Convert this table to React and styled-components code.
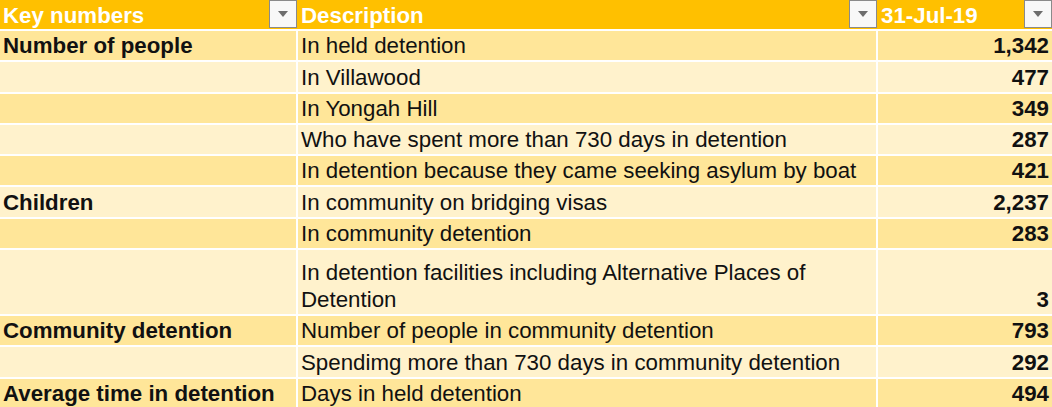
import React from 'react';
import styled, { createGlobalStyle } from 'styled-components';

const GlobalStyle = createGlobalStyle`
  html, body {
    margin: 0;
    padding: 0;
    background: #ffffff;
  }
  body {
    font-family: "Liberation Sans", Arial, sans-serif;
    overflow: hidden;
  }
`;

const Sheet = styled.div`
  width: 1052px;
  display: grid;
  grid-template-columns: 296px 578px 174px;
  column-gap: 2px;
  row-gap: 2px;
  background: #ffffff;
`;

const HeaderCell = styled.div`
  height: 29px;
  background: #ffc000;
  color: #ffffff;
  font-weight: bold;
  font-size: 22.3px;
  display: flex;
  align-items: center;
  justify-content: space-between;
  padding-left: 3px;
  margin-right: ${(p) => (p.last ? '0' : '-2px')};
  position: relative;
  z-index: ${(p) => (p.last ? 0 : 1)};
`;

const HeaderLabel = styled.span`
  line-height: 29px;
  padding-top: 2px;
`;

const FilterButton = styled.span`
  width: 28px;
  height: 28px;
  box-sizing: border-box;
  border: 1px solid #8a8a8a;
  background: #f8f8f8;
  display: flex;
  align-items: center;
  justify-content: center;
  margin-right: ${(p) => (p.last ? '0' : '1px')};
  align-self: flex-start;
  flex-shrink: 0;

  &::after {
    content: '';
    width: 0;
    height: 0;
    border-left: 5px solid transparent;
    border-right: 5px solid transparent;
    border-top: 6px solid #6d6d6d;
  }
`;

const Cell = styled.div`
  height: ${(p) => (p.tall ? '64px' : '29.3px')};
  background: ${(p) => (p.shade ? '#ffe699' : '#fff2cc')};
  color: #111111;
  font-size: 22.3px;
  line-height: 27px;
  font-weight: ${(p) => (p.bold ? 'bold' : 'normal')};
  text-align: ${(p) => (p.num ? 'right' : 'left')};
  padding: ${(p) => (p.num ? '0 3px 0 0' : '0 0 0 3px')};
  display: flex;
  flex-direction: column;
  justify-content: flex-end;
  padding-bottom: 1px;
  box-sizing: border-box;
  overflow: hidden;
  white-space: ${(p) => (p.wrap ? 'normal' : 'nowrap')};
`;

const rows = [
  { key: 'Number of people', desc: 'In held detention', value: '1,342' },
  { key: '', desc: 'In Villawood', value: '477' },
  { key: '', desc: 'In Yongah Hill', value: '349' },
  { key: '', desc: 'Who have spent more than 730 days in detention', value: '287' },
  { key: '', desc: 'In detention because they came seeking asylum by boat', value: '421' },
  { key: 'Children', desc: 'In community on bridging visas', value: '2,237' },
  { key: '', desc: 'In community detention', value: '283' },
  {
    key: '',
    desc: 'In detention facilities including Alternative Places of Detention',
    value: '3',
    tall: true,
  },
  { key: 'Community detention', desc: 'Number of people in community detention', value: '793' },
  { key: '', desc: 'Spendimg more than 730 days in community detention', value: '292' },
  { key: 'Average time in detention', desc: 'Days in held detention', value: '494' },
];

export default function App() {
  return (
    <>
      <GlobalStyle />
      <Sheet>
        <HeaderCell>
          <HeaderLabel>Key numbers</HeaderLabel>
          <FilterButton />
        </HeaderCell>
        <HeaderCell>
          <HeaderLabel>Description</HeaderLabel>
          <FilterButton />
        </HeaderCell>
        <HeaderCell last>
          <HeaderLabel>31-Jul-19</HeaderLabel>
          <FilterButton last />
        </HeaderCell>

        {rows.map((row, i) => {
          const shade = i % 2 === 0;
          return (
            <React.Fragment key={i}>
              <Cell shade={shade} bold tall={row.tall}>
                {row.key}
              </Cell>
              <Cell shade={shade} tall={row.tall} wrap={row.tall}>
                {row.desc}
              </Cell>
              <Cell shade={shade} bold num tall={row.tall}>
                {row.value}
              </Cell>
            </React.Fragment>
          );
        })}
      </Sheet>
    </>
  );
}
